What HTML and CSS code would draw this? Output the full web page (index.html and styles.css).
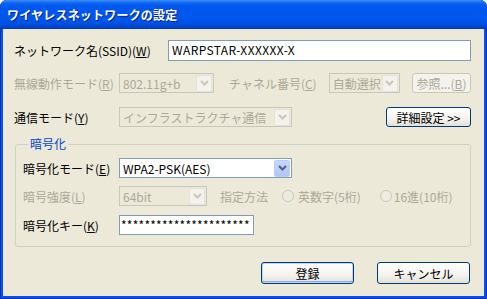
FILE: index.html
```html
<!DOCTYPE html>
<html>

<head>
	<title>ワイヤレスネットワークの設定</title>
	<link rel="stylesheet" href="styles.css">
</head>

<body>
	<div class="window">
		<div class="titlebar">ワイヤレスネットワークの設定</div>
		<div class="client">
			<div class="row row-ssid">
				<span class="label">ネットワーク名(SSID)(<u>W</u>)</span>
				<div class="edit ssid">WARPSTAR-XXXXXX-X</div>
			</div>

			<div class="row row-mode">
				<span class="label disabled">無線動作モード(<u>R</u>)</span>
				<div class="combo off w-mode">
					<span class="value">802.11g+b</span>
					<span class="drop"><svg width="9" height="6" viewBox="0 0 9 6"><path d="M1 1 L4.5 4.5 L8 1" fill="none" stroke="currentColor" stroke-width="2"/></svg></span>
				</div>
				<span class="text disabled ch-label">チャネル番号(<u>C</u>)</span>
				<div class="combo off w-ch">
					<span class="value">自動選択</span>
					<span class="drop"><svg width="9" height="6" viewBox="0 0 9 6"><path d="M1 1 L4.5 4.5 L8 1" fill="none" stroke="currentColor" stroke-width="2"/></svg></span>
				</div>
				<div class="button off browse">参照...(<u>B</u>)</div>
			</div>

			<div class="row row-comm">
				<span class="label">通信モード(<u>Y</u>)</span>
				<div class="combo off w-wide">
					<span class="value">インフラストラクチャ通信</span>
					<span class="drop"><svg width="9" height="6" viewBox="0 0 9 6"><path d="M1 1 L4.5 4.5 L8 1" fill="none" stroke="currentColor" stroke-width="2"/></svg></span>
				</div>
				<div class="button detail">詳細設定 &gt;&gt;</div>
			</div>

			<fieldset class="group">
				<legend class="group-title">暗号化</legend>

				<div class="row row-enc">
					<span class="label">暗号化モード(<u>E</u>)</span>
					<div class="combo w-wide">
						<span class="value">WPA2-PSK(AES)</span>
						<span class="drop"><svg width="9" height="6" viewBox="0 0 9 6"><path d="M1 1 L4.5 4.5 L8 1" fill="none" stroke="currentColor" stroke-width="2"/></svg></span>
					</div>
				</div>

				<div class="row row-strength">
					<span class="label disabled">暗号強度(<u>L</u>)</span>
					<div class="combo off w-bits">
						<span class="value">64bit</span>
						<span class="drop"><svg width="9" height="6" viewBox="0 0 9 6"><path d="M1 1 L4.5 4.5 L8 1" fill="none" stroke="currentColor" stroke-width="2"/></svg></span>
					</div>
					<span class="text disabled how">指定方法</span>
					<span class="radio"></span>
					<span class="text disabled">英数字(5桁)</span>
					<span class="radio second"></span>
					<span class="text disabled">16進(10桁)</span>
				</div>

				<div class="row row-key">
					<span class="label">暗号化キー(<u>K</u>)</span>
					<div class="edit key">**********************</div>
				</div>
			</fieldset>

			<div class="actions">
				<div class="button default">登録</div>
				<div class="button">キャンセル</div>
			</div>
		</div>
	</div>
</body>

</html>
```

FILE: styles.css
```css
body,
* {
	margin: 0;
	padding: 0;
	box-sizing: border-box;
}

body {
	background: #fff;
	font-family: "Noto Sans CJK JP", "Noto Sans", sans-serif;
	font-size: 12px;
	color: #000;
}

.window {
	width: 487px;
	height: 299px;
	background: #0553e6;
	border-radius: 7px 7px 0 0;
	box-shadow: inset 0 0 0 1px #0a2fc4;
	display: flex;
	flex-direction: column;
}

.titlebar {
	height: 29px;
	padding: 0 0 0 7px;
	line-height: 30px;
	color: #fff;
	font-weight: bold;
	font-size: 12px;
	letter-spacing: 0.2px;
	text-shadow: 1px 1px #0a1e8a;
	border-radius: 7px 7px 0 0;
	background: linear-gradient(#3d91fb 0, #0f63f2 3px, #0058ee 6px, #0057ec 17px, #0052e6 23px, #0045d0 27px, #0238b8 29px);
}

.client {
	width: 481px;
	height: 267px;
	margin: 0 3px;
	background: #ece9d8;
	padding: 11px 13px 0 11px;
}

.row {
	display: flex;
	align-items: center;
	height: 20px;
}

.row-ssid { height: 21px; }
.row-mode { margin-top: 12px; }
.row-comm { margin-top: 14px; }

.label {
	width: 105px;
	flex-shrink: 0;
	white-space: nowrap;
}

.disabled { color: #aca899; }

.text { white-space: nowrap; }

.edit {
	height: 100%;
	border: 1px solid #7f9db9;
	background: #fff;
	padding: 0 3px;
	line-height: 18px;
	white-space: nowrap;
	overflow: hidden;
}

.ssid {
	width: 305px;
	margin-left: 49px;
	letter-spacing: 0.4px;
}

.combo {
	display: flex;
	align-items: center;
	height: 20px;
	border: 1px solid #7f9db9;
	background: #fff;
	padding: 0 1px 0 3px;
}

.combo .value {
	flex: 1;
	white-space: nowrap;
	overflow: hidden;
}

.combo .drop {
	width: 16px;
	height: 17px;
	display: flex;
	align-items: center;
	justify-content: center;
	border-radius: 2px;
	border: 1px solid #b9cdf7;
	background: linear-gradient(#c6d7fc, #b1c6f6);
	color: #4d6185;
}

.combo.off {
	border-color: #c9c7ba;
	background: #ece9d8;
	color: #aca899;
}

.combo.off .drop {
	border-color: #e3e2d9;
	background: #f3f2ec;
	color: #c9c7ba;
}

.w-mode { width: 95px; }
.w-ch { width: 71px; }
.w-wide { width: 173px; }
.w-bits { width: 88px; }

.ch-label { margin: 0 12px 0 15px; }

.button {
	width: 93px;
	height: 22px;
	display: flex;
	align-items: center;
	justify-content: center;
	border: 1px solid #003c74;
	border-radius: 3px;
	background: linear-gradient(#fff, #f4f3ee 60%, #e3e1d6);
	white-space: nowrap;
}

.button.off {
	border-color: #c9c7ba;
	background: #f3f2ec;
	color: #aca899;
}

.browse {
	width: 59px;
	height: 20px;
	margin-left: auto;
}

.detail {
	width: 85px;
	height: 20px;
	margin-left: auto;
}

.button.default {
	box-shadow: inset 0 0 0 1px #bcd4f6, inset 0 -1px 0 1px #89ade4;
}

.group {
	margin: 10px 0 0 1px;
	width: 456px;
	border: 1px solid #d0d0bf;
	border-radius: 3px;
	padding: 7px 0 11px 7px;
}

.group-title {
	color: #0046d5;
	padding: 0 2px;
	margin-left: 5px;
	line-height: 14px;
}

.group .label { width: 96px; }

.row-strength { margin-top: 8px; }
.row-key { margin-top: 9px; }

.how { margin: 0 14px 0 13px; }

.radio {
	width: 12px;
	height: 12px;
	border-radius: 50%;
	border: 1px solid #cac8bb;
	background: #eeebe0;
	margin-right: 4px;
	flex-shrink: 0;
}

.radio.second { margin-left: 19px; margin-right: 2px; }

.key {
	width: 135px;
	letter-spacing: 0.25px;
	padding: 0 1px;
}

.actions {
	display: flex;
	justify-content: flex-end;
	gap: 23px;
	margin-top: 15px;
	padding-right: 1px;
}
```
